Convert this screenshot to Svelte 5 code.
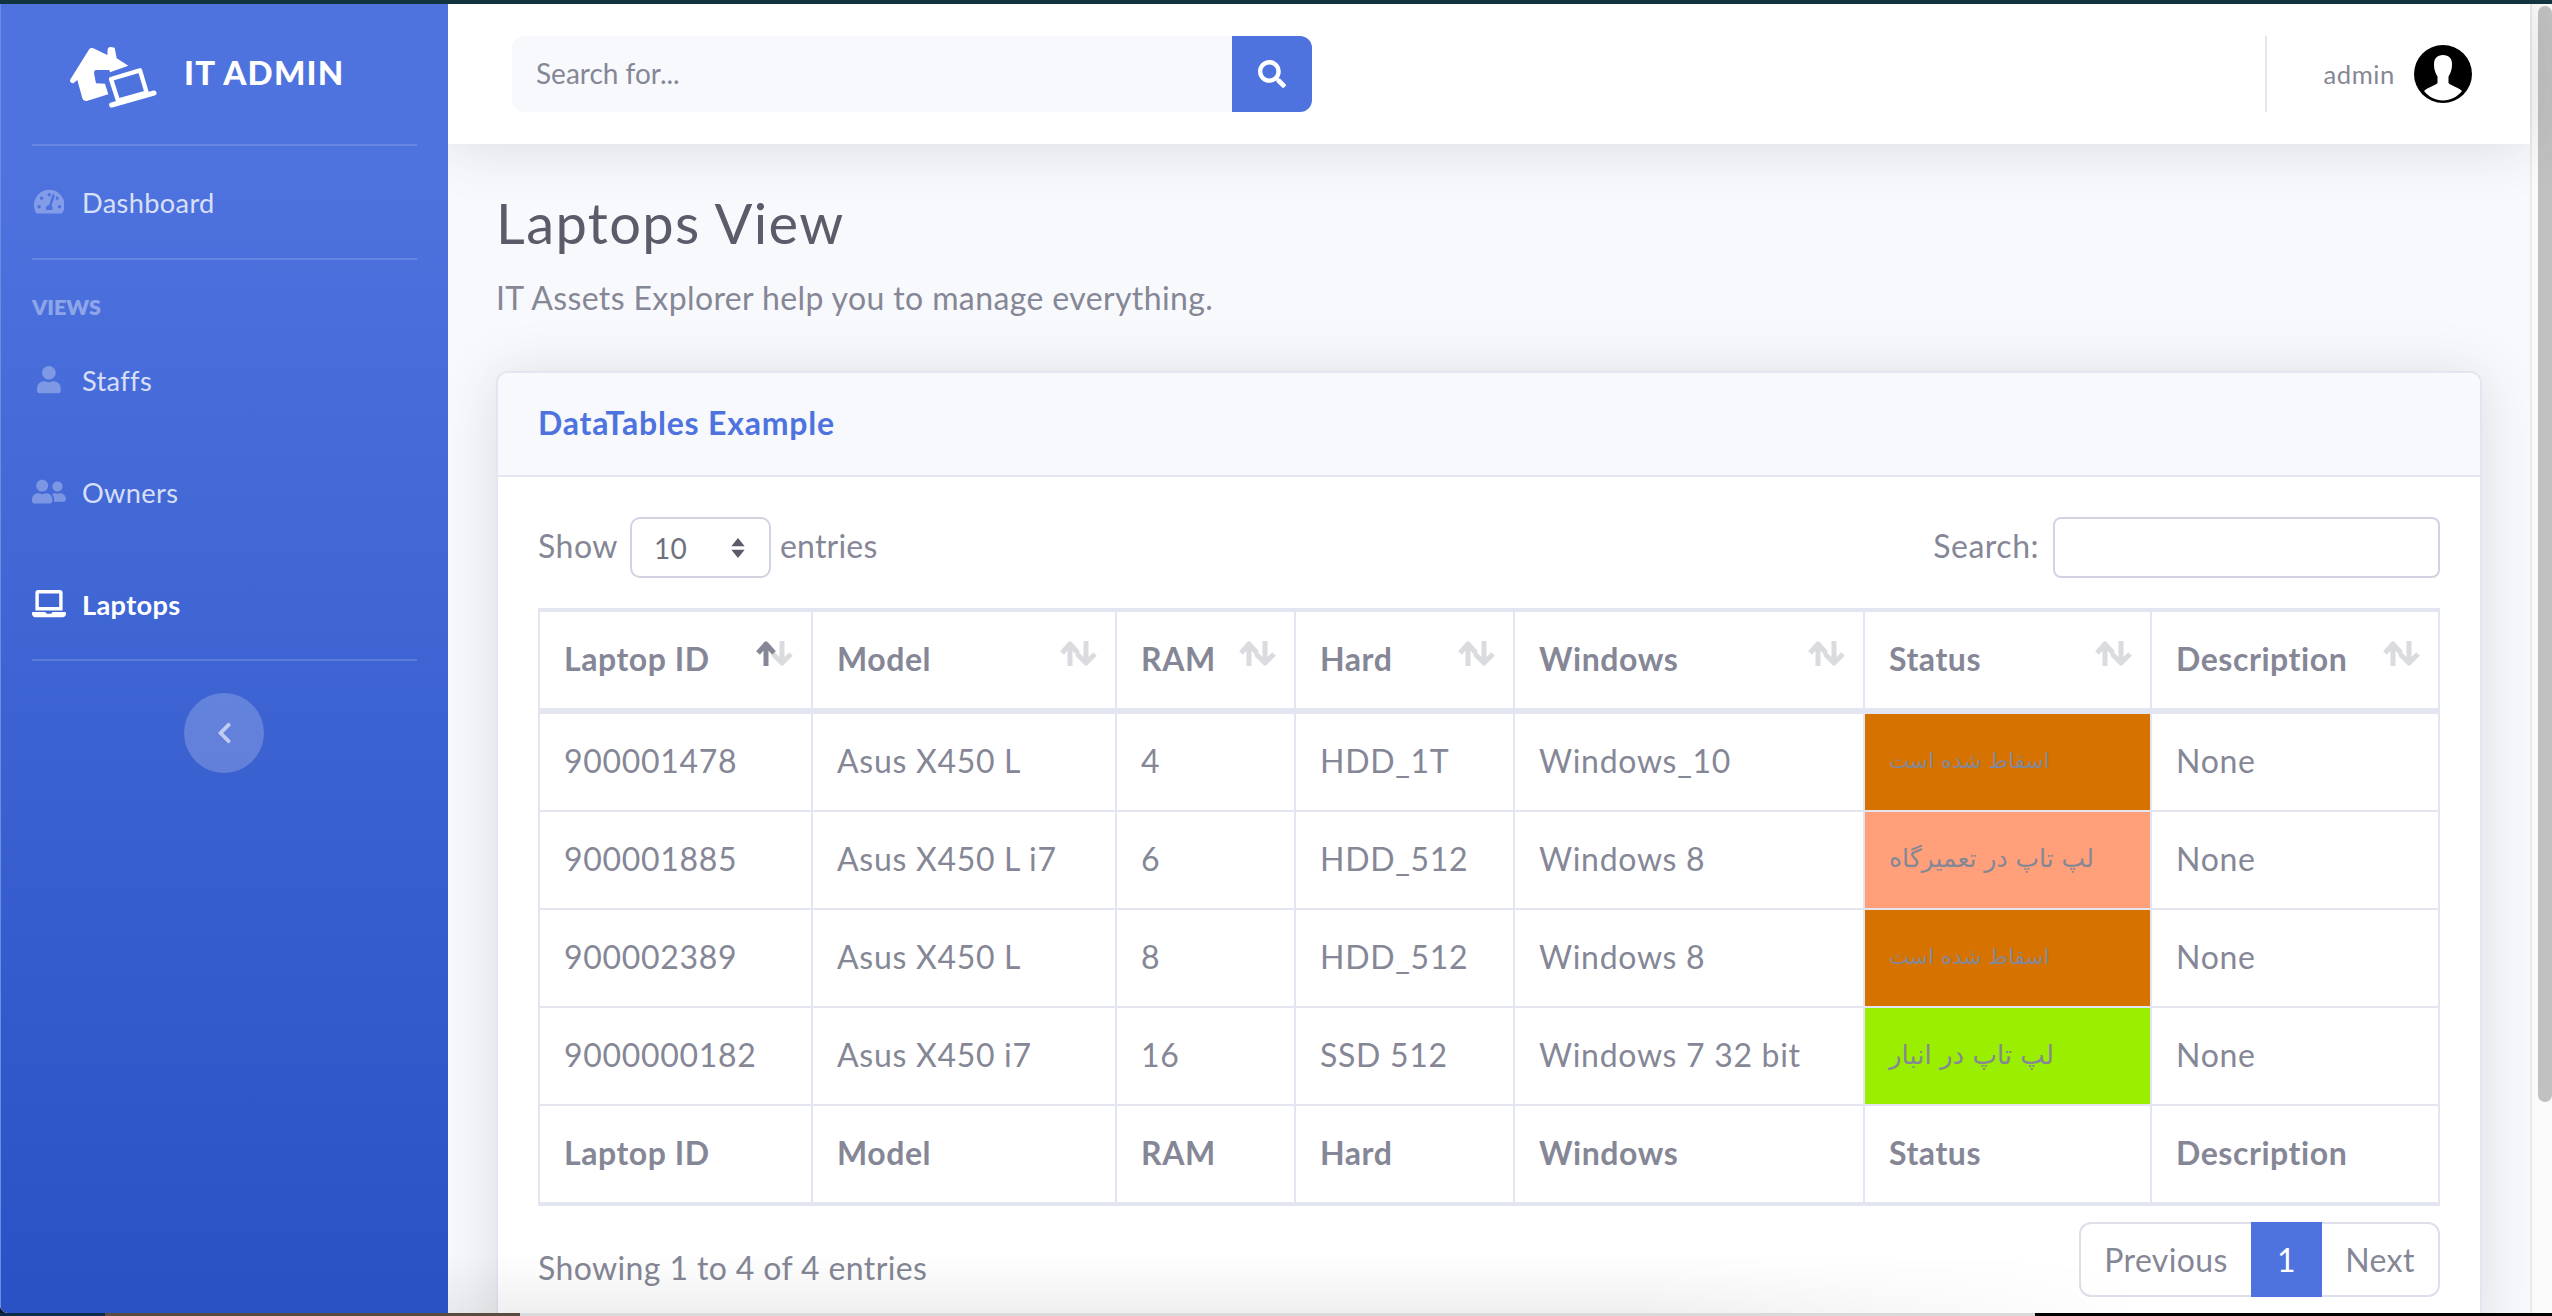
<script>
    const columns = [
        { name: 'Laptop ID', width: 273 },
        { name: 'Model', width: 304 },
        { name: 'RAM', width: 179 },
        { name: 'Hard', width: 219 },
        { name: 'Windows', width: 350 },
        { name: 'Status', width: 287 },
        { name: 'Description', width: 288 }
    ];

    const lost = { text: 'اسقاط شده است', color: '#d67300', size: 21.5 };
    const repair = { text: 'لپ تاپ در تعمیرگاه', color: '#ffa07a', size: 25 };
    const store = { text: 'لپ تاپ در انبار', color: '#9aee00', size: 26 };

    const laptops = [
        { id: '900001478', model: 'Asus X450 L', ram: '4', hard: 'HDD_1T', windows: 'Windows_10', status: lost },
        { id: '900001885', model: 'Asus X450 L i7', ram: '6', hard: 'HDD_512', windows: 'Windows 8', status: repair },
        { id: '900002389', model: 'Asus X450 L', ram: '8', hard: 'HDD_512', windows: 'Windows 8', status: lost },
        { id: '9000000182', model: 'Asus X450 i7', ram: '16', hard: 'SSD 512', windows: 'Windows 7 32 bit', status: store }
    ];
</script>

<div class="screen">
    <div class="topstrip"></div>
    <div class="window">
        <aside class="sidebar">
            <div class="brand">
                <svg class="logo" viewBox="0 0 330 240">
                    <path fill="#fff" d="M30 135 L88 42 Q92 37 100 40 L142 60 L143 42 Q145 35 153 36 L164 38 L170 70 L205 92 L150 112 L148 105 L107 105 Q100 108 103 120 L108 145 L135 146 L145 178 L80 198 Q70 200 67 190 L52 135 L40 145 Q30 145 30 135 Z"/>
                    <path fill="none" stroke="#4e73df" stroke-width="26" d="M150 130 L240 103 L263 175 L172 200 Z"/>
                    <path fill="#4e73df" stroke="#fff" stroke-width="13" stroke-linejoin="round" d="M153 132 L240 106 L260 173 L174 197 Z"/>
                    <path fill="none" stroke="#fff" stroke-width="15" stroke-linecap="round" d="M155 210 L282 174"/>
                </svg>
                <span class="brand-text">IT ADMIN</span>
            </div>
            <hr class="divider" />
            <a class="nav-item">
                <span class="nav-icon">
                    <svg viewBox="0 0 576 512"><path d="M288 32C128.94 32 0 160.94 0 320c0 52.8 14.25 102.26 39.06 144.8 5.61 9.62 16.3 15.2 27.44 15.2h443c11.14 0 21.83-5.58 27.44-15.2C561.75 422.26 576 372.8 576 320c0-159.06-128.94-288-288-288zm0 64c14.71 0 26.58 10.13 30.32 23.65-1.11 2.26-2.64 4.23-3.45 6.67l-9.22 27.67c-5.13 3.49-10.97 6.01-17.64 6.01-17.67 0-32-14.33-32-32S270.33 96 288 96zM96 384c-17.67 0-32-14.33-32-32s14.33-32 32-32 32 14.33 32 32-14.33 32-32 32zm48-160c-17.67 0-32-14.33-32-32s14.33-32 32-32 32 14.33 32 32-14.33 32-32 32zm246.77-72.41l-61.33 184C343.13 347.33 352 364.54 352 384c0 11.72-3.38 22.55-8.88 32H232.88c-5.5-9.45-8.88-20.28-8.88-32 0-33.94 26.5-61.43 59.9-63.59l61.34-184.01c4.17-12.56 17.73-19.45 30.36-15.17 12.57 4.19 19.35 17.79 15.17 30.36zm14.66 57.2l15.52-46.55c3.47-1.29 7.13-2.23 11.05-2.23 17.67 0 32 14.33 32 32s-14.33 32-32 32c-11.38-.01-20.89-6.28-26.57-15.22zM480 384c-17.67 0-32-14.33-32-32s14.33-32 32-32 32 14.33 32 32-14.33 32-32 32z"/></svg>
                </span>
                Dashboard
            </a>
            <hr class="divider" />
            <div class="nav-heading">VIEWS</div>
            <a class="nav-item">
                <span class="nav-icon">
                    <svg viewBox="0 0 448 512"><path d="M224 256c70.7 0 128-57.3 128-128S294.7 0 224 0 96 57.3 96 128s57.3 128 128 128zm89.6 32h-16.7c-22.2 10.2-46.9 16-72.9 16s-50.6-5.8-72.9-16h-16.7C60.2 288 0 348.2 0 422.4V464c0 26.5 21.5 48 48 48h352c26.5 0 48-21.5 48-48v-41.6c0-74.2-60.2-134.4-134.4-134.4z"/></svg>
                </span>
                Staffs
            </a>
            <a class="nav-item">
                <span class="nav-icon">
                    <svg viewBox="0 0 640 512"><path d="M192 256c61.9 0 112-50.1 112-112S253.9 32 192 32 80 82.1 80 144s50.1 112 112 112zm76.8 32h-8.3c-20.8 10-43.9 16-68.5 16s-47.6-6-68.5-16h-8.3C51.6 288 0 339.6 0 403.2V432c0 26.5 21.5 48 48 48h288c26.5 0 48-21.5 48-48v-28.8c0-63.6-51.6-115.2-115.2-115.2zM480 256c53 0 96-43 96-96s-43-96-96-96-96 43-96 96 43 96 96 96zm48 32h-3.8c-13.9 4.8-28.6 8-44.2 8s-30.3-3.2-44.2-8H432c-20.4 0-39.2 5.9-55.7 15.4 24.4 26.3 39.7 61.2 39.7 99.8v38.4c0 2.2-.5 4.3-.6 6.4H592c26.5 0 48-21.5 48-48 0-61.9-50.1-112-112-112z"/></svg>
                </span>
                Owners
            </a>
            <a class="nav-item active">
                <span class="nav-icon">
                    <svg viewBox="0 0 640 512"><path d="M624 416H381.54c-.74 19.81-14.71 32-32.74 32H288c-18.69 0-33.02-17.47-32.77-32H16c-8.8 0-16 7.2-16 16v16c0 35.2 28.8 64 64 64h512c35.2 0 64-28.8 64-64v-16c0-8.8-7.2-16-16-16zM576 48c0-26.4-21.6-48-48-48H112C85.6 0 64 21.6 64 48v336h512V48zm-64 272H128V64h384v256z"/></svg>
                </span>
                Laptops
            </a>
            <hr class="divider last" />
            <button class="toggle" aria-label="Collapse">
                <svg viewBox="0 0 320 512"><path d="M34.52 239.03L228.87 44.69c9.37-9.37 24.57-9.37 33.94 0l22.67 22.67c9.36 9.36 9.38 24.54.04 33.92L131.49 256l154.02 154.75c9.34 9.38 9.32 24.56-.04 33.92l-22.67 22.67c-9.37 9.37-24.57 9.37-33.94 0L34.52 272.97c-9.37-9.37-9.37-24.57 0-33.94z"/></svg>
            </button>
        </aside>

        <div class="main">
            <header class="topbar">
                <div class="searchbox">
                    <span class="placeholder">Search for...</span>
                    <button class="searchbtn" aria-label="Search">
                        <svg viewBox="0 0 512 512"><path d="M505 442.7L405.3 343c-4.5-4.5-10.6-7-17-7H372c27.6-35.3 44-79.7 44-128C416 93.1 322.9 0 208 0S0 93.1 0 208s93.1 208 208 208c48.3 0 92.7-16.4 128-44v16.3c0 6.4 2.5 12.5 7 17l99.7 99.7c9.4 9.4 24.6 9.4 33.9 0l28.3-28.3c9.4-9.4 9.4-24.6.1-34zM208 336c-70.7 0-128-57.2-128-128 0-70.7 57.2-128 128-128 70.7 0 128 57.2 128 128 0 70.7-57.2 128-128 128z"/></svg>
                    </button>
                </div>
                <div class="user">
                    <span class="user-name">admin</span>
                    <svg class="avatar" viewBox="0 0 58 58">
                        <circle cx="29" cy="29" r="29" fill="#000"/>
                        <path fill="#fff" d="M29 10c-6 0-9 3.500-9 9 0 3 .3 5 1 7 .5 2 1.500 4 2.500 5.500V38c-1 2-9 4-13.500 8 5 6 11.500 9.500 19 9.500S43 52 48 46c-4.500-4-12.500-6-13.500-8v-6.500C35.500 30 36.500 28 37 26c.7-2 1-4 1-7 0-5.500-3-9-9-9z"/>
                    </svg>
                </div>
            </header>

            <div class="content">
                <h1>Laptops View</h1>
                <p class="lead">IT Assets Explorer help you to manage everything.</p>

                <section class="card">
                    <div class="card-header">DataTables Example</div>
                    <div class="card-body">
                        <div class="controls">
                            <div class="length">
                                <span class="ctl-label">Show</span>
                                <div class="select">
                                    <span>10</span>
                                    <svg viewBox="0 0 16 24" width="16" height="20">
                                        <path fill="#5a5c69" d="M8 0 L16 10 H0 Z M0 14 H16 L8 24 Z"/>
                                    </svg>
                                </div>
                                <span class="ctl-label entries">entries</span>
                            </div>
                            <div class="filter">
                                <span class="ctl-label">Search:</span>
                                <input type="text" />
                            </div>
                        </div>

                        <table>
                            <colgroup>
                                {#each columns as col}
                                    <col style="width: {col.width}px" />
                                {/each}
                            </colgroup>
                            <thead>
                                <tr>
                                    {#each columns as col, i}
                                        <th>
                                            {col.name}
                                            <svg class="sort" viewBox="0 0 37 25">
                                                <path class:on={i === 0} d="M10 25 V5 M2 12 L10 3 L18 12" />
                                                <path d="M26 0 V20 M17 13 L26 22 L35 13" />
                                            </svg>
                                        </th>
                                    {/each}
                                </tr>
                            </thead>
                            <tbody>
                                {#each laptops as laptop}
                                    <tr>
                                        <td>{laptop.id}</td>
                                        <td>{laptop.model}</td>
                                        <td>{laptop.ram}</td>
                                        <td>{laptop.hard}</td>
                                        <td>{laptop.windows}</td>
                                        <td class="status" style="background-color: {laptop.status.color}; font-size: {laptop.status.size}px">{laptop.status.text}</td>
                                        <td>None</td>
                                    </tr>
                                {/each}
                            </tbody>
                            <tfoot>
                                <tr>
                                    {#each columns as col}
                                        <th>{col.name}</th>
                                    {/each}
                                </tr>
                            </tfoot>
                        </table>

                        <div class="footer">
                            <div class="info">Showing 1 to 4 of 4 entries</div>
                            <div class="pager">
                                <span class="page prev">Previous</span>
                                <span class="page current">1</span>
                                <span class="page next">Next</span>
                            </div>
                        </div>
                    </div>
                </section>
            </div>
            <div class="bottom-shade"></div>
        </div>

        <div class="scrollbar"><div class="thumb"></div></div>
    </div>
    <div class="bottomstrip">
        <span class="navy"></span>
        <span class="brown"></span>
        <span class="grey"></span>
        <span class="black"></span>
    </div>
</div>

<style>
    :global(body) {
        margin: 0;
        background: #000;
    }

    .screen {
        width: 2552px;
        height: 1316px;
        overflow: hidden;
        display: flex;
        flex-direction: column;
        font-family: Lato, "Noto Sans", sans-serif;
        font-size: 32px;
        letter-spacing: 0.38px;
        color: #858796;
        background: #0b1a22;
    }

    .topstrip {
        height: 4px;
        flex: none;
        background: #12343f;
    }

    .window {
        flex: 1;
        min-height: 0;
        display: flex;
        overflow: hidden;
        background: #f8f9fc;
        border-bottom-left-radius: 8px;
    }

    /* Sidebar */
    .sidebar {
        width: 448px;
        flex: none;
        height: 1566px;
        display: flex;
        flex-direction: column;
        box-sizing: border-box;
        border-left: 1px solid #6d8ae4;
        background: linear-gradient(180deg, #4e73df 10%, #224abe 100%);
        position: relative;
        z-index: 3;
    }

    .brand {
        height: 140px;
        flex: none;
        display: flex;
        align-items: center;
        padding-left: 59px;
        gap: 14px;
        color: #fff;
    }

    .logo {
        width: 110px;
        height: 80px;
        margin-top: 2px;
    }

    .brand-text {
        font-size: 33px;
        font-weight: 900;
        letter-spacing: 1.2px;
        transform: translateY(-2px);
    }

    .divider {
        border: 0;
        border-top: 2px solid rgba(255, 255, 255, 0.15);
        margin: 0 31px;
        flex: none;
    }

    .divider.last {
        margin-top: -1px;
    }

    .nav-item {
        height: 112px;
        flex: none;
        display: flex;
        align-items: center;
        padding-left: 31px;
        font-size: 27.2px;
        letter-spacing: 0.35px;
        color: rgba(255, 255, 255, 0.8);
    }

    .nav-item.active {
        color: #fff;
        font-weight: 700;
    }

    .nav-icon {
        width: 34px;
        margin-right: 16px;
        display: flex;
        justify-content: center;
    }

    .nav-icon svg {
        height: 27.2px;
        fill: rgba(255, 255, 255, 0.3);
    }

    .active .nav-icon svg {
        fill: #fff;
    }

    .nav-heading {
        height: 32px;
        flex: none;
        padding: 31px 31px 1px;
        font-size: 21.5px;
        line-height: 32px;
        font-weight: 800;
        letter-spacing: 0;
        color: rgba(255, 255, 255, 0.4);
    }

    .toggle {
        width: 80px;
        height: 80px;
        margin: 32px 0 0 183px;
        border: 0;
        border-radius: 50%;
        padding: 0;
        background: rgba(255, 255, 255, 0.2);
        display: flex;
        align-items: center;
        justify-content: center;
    }

    .toggle svg {
        height: 24px;
        fill: rgba(255, 255, 255, 0.6);
    }

    /* Main column */
    .main {
        flex: 1;
        min-width: 0;
        position: relative;
        border-right: 2px solid #ebebeb;
    }

    .topbar {
        height: 140px;
        display: flex;
        align-items: center;
        justify-content: space-between;
        padding: 0 22px 0 64px;
        background: #fff;
        box-shadow: 0 4px 56px rgba(58, 59, 69, 0.15);
        position: relative;
        z-index: 2;
    }

    .searchbox {
        width: 800px;
        height: 76px;
        display: flex;
        align-items: center;
        justify-content: space-between;
        background: #f8f9fc;
        border-radius: 12px;
        overflow: hidden;
    }

    .placeholder {
        padding: 0 0 2px 24px;
        font-size: 28px;
        letter-spacing: 0;
    }

    .searchbtn {
        width: 80px;
        height: 76px;
        border: 0;
        padding: 0;
        background: #4e73df;
        display: flex;
        align-items: center;
        justify-content: center;
    }

    .searchbtn svg {
        width: 28px;
        height: 28px;
        fill: #fff;
    }

    .user {
        height: 76px;
        display: flex;
        align-items: center;
        border-left: 2px solid #e3e6f0;
        padding: 0 36px 0 56px;
        gap: 19px;
    }

    .user-name {
        font-size: 25.6px;
        letter-spacing: 0.6px;
    }

    .avatar {
        width: 58px;
        height: 58px;
    }

    .content {
        padding: 0 48px;
    }

    h1 {
        margin: 45px 0 0;
        font-size: 56px;
        line-height: 67px;
        font-weight: 400;
        letter-spacing: 1.4px;
        color: #5a5c69;
    }

    .lead {
        margin: 18px 0 0;
        line-height: 48px;
    }

    /* Card */
    .card {
        margin-top: 49px;
        background: #fff;
        border: 2px solid #e3e6f0;
        border-radius: 12px;
        box-shadow: 0 4px 56px rgba(58, 59, 69, 0.15);
    }

    .card-header {
        height: 102px;
        line-height: 100px;
        padding: 0 40px;
        border-bottom: 2px solid #e3e6f0;
        background: #f8f9fc;
        border-radius: 10px 10px 0 0;
        font-weight: 700;
        letter-spacing: 0.8px;
        color: #4e73df;
    }

    .card-body {
        padding: 40px;
    }

    .controls {
        height: 61px;
        display: flex;
        justify-content: space-between;
        align-items: center;
        margin-bottom: 30px;
    }

    .length, .filter {
        display: flex;
        align-items: center;
    }

    .ctl-label {
        padding-bottom: 5px;
        letter-spacing: 0.5px;
    }

    .entries {
        letter-spacing: 0.2px;
    }

    .select {
        box-sizing: content-box;
        width: 92px;
        height: 57px;
        margin: 0 9px 0 12px;
        padding: 0 23px 0 22px;
        border: 2px solid #d1d3e2;
        border-radius: 10px;
        display: flex;
        align-items: center;
        justify-content: space-between;
        font-size: 28px;
        color: #6e707e;
    }

    .filter input {
        width: 383px;
        height: 57px;
        margin-left: 14px;
        padding: 0;
        border: 2px solid #d1d3e2;
        border-radius: 8px;
        background: #fff;
    }

    /* Table */
    table {
        width: 1902px;
        table-layout: fixed;
        border-collapse: separate;
        border-spacing: 0;
        border-top: 4px solid #e3e6f0;
        border-left: 2px solid #e3e6f0;
    }

    th, td {
        box-sizing: border-box;
        height: 98px;
        padding: 0 24px 3px;
        border-right: 2px solid #e3e6f0;
        border-bottom: 2px solid #e3e6f0;
        text-align: left;
        white-space: nowrap;
        background-clip: padding-box;
        letter-spacing: 0.7px;
    }

    th {
        font-weight: 700;
        position: relative;
        letter-spacing: 0.55px;
    }

    thead th {
        height: 102px;
        border-bottom-width: 6px;
    }

    tfoot th {
        height: 100px;
        border-bottom-width: 4px;
    }

    td.status {
        font-family: "DejaVu Sans", sans-serif;
        letter-spacing: 0;
    }

    .sort {
        position: absolute;
        right: 18px;
        top: 29px;
        width: 37px;
        height: 25px;
    }

    .sort path {
        fill: none;
        stroke: #858796;
        stroke-width: 5;
        stroke-linejoin: round;
        opacity: 0.3;
    }

    .sort path.on {
        opacity: 1;
    }

    .footer {
        display: flex;
        justify-content: space-between;
        align-items: flex-start;
        margin-top: 16px;
    }

    .info {
        padding-top: 22px;
        line-height: 48px;
    }

    .pager {
        display: flex;
        height: 75px;
    }

    .page {
        display: flex;
        align-items: center;
        justify-content: center;
        box-sizing: border-box;
        border: 2px solid #dddfeb;
    }

    .prev {
        width: 172px;
        border-right: 0;
        border-radius: 12px 0 0 12px;
    }

    .current {
        width: 71px;
        background: #4e73df;
        border-color: #4e73df;
        color: #fff;
    }

    .next {
        width: 118px;
        border-left: 0;
        border-radius: 0 12px 12px 0;
    }

    .bottom-shade {
        position: absolute;
        left: 0;
        width: 1700px;
        top: 1250px;
        height: 70px;
        background: linear-gradient(to top, rgba(0, 0, 0, 0.07), rgba(0, 0, 0, 0));
        -webkit-mask-image: linear-gradient(to right, #000 70%, transparent);
        mask-image: linear-gradient(to right, #000 70%, transparent);
        pointer-events: none;
    }

    /* Window scrollbar */
    .scrollbar {
        width: 20px;
        flex: none;
        background: #fafafa;
        box-sizing: border-box;
        padding: 2px 0 0 6px;
    }

    .thumb {
        height: 1096px;
        background: #c1c1c1;
        border-radius: 7px;
    }

    .bottomstrip {
        height: 3px;
        flex: none;
        display: flex;
    }

    .navy {
        width: 105px;
        background: #0c2a4a;
    }

    .brown {
        width: 415px;
        background: #5b4a3e;
    }

    .grey {
        width: 1515px;
        background: #d9d9d9;
    }

    .black {
        flex: 1;
        background: #000;
    }
</style>
